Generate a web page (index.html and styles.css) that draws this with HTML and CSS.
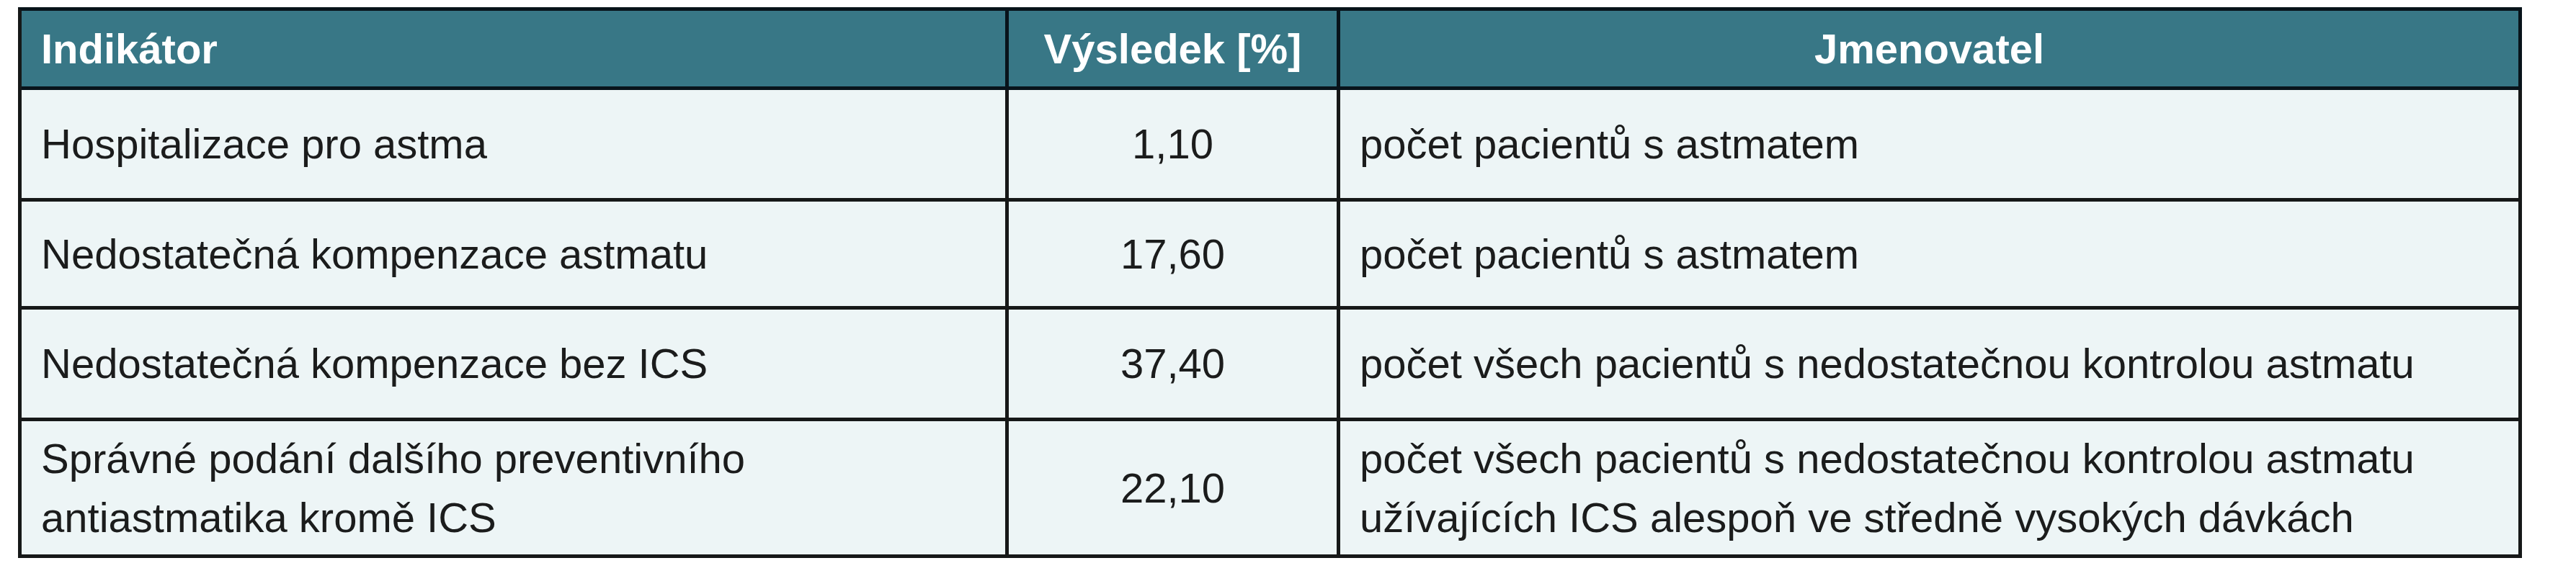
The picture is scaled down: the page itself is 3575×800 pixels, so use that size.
FILE: index.html
```html
<!DOCTYPE html>
<html lang="cs">
<head>
<meta charset="utf-8">
<title>Indikátory astmatu</title>
<link rel="stylesheet" href="styles.css">
</head>
<body>
<table class="ind-table">
  <thead>
    <tr class="row-head">
      <th class="c-ind">Indikátor</th>
      <th class="c-res">Výsledek [%]</th>
      <th class="c-den c-center">Jmenovatel</th>
    </tr>
  </thead>
  <tbody>
    <tr class="row-a">
      <td class="c-ind">Hospitalizace pro astma</td>
      <td class="c-res">1,10</td>
      <td class="c-den">počet pacientů s astmatem</td>
    </tr>
    <tr class="row-b">
      <td class="c-ind">Nedostatečná kompenzace astmatu</td>
      <td class="c-res">17,60</td>
      <td class="c-den">počet pacientů s astmatem</td>
    </tr>
    <tr class="row-a">
      <td class="c-ind">Nedostatečná kompenzace bez ICS</td>
      <td class="c-res">37,40</td>
      <td class="c-den">počet všech pacientů s nedostatečnou kontrolou astmatu</td>
    </tr>
    <tr class="row-c">
      <td class="c-ind">Správné podání dalšího preventivního<br>antiastmatika kromě ICS</td>
      <td class="c-res">22,10</td>
      <td class="c-den">počet všech pacientů s nedostatečnou kontrolou astmatu<br>užívajících ICS alespoň ve středně vysokých dávkách</td>
    </tr>
  </tbody>
</table>
</body>
</html>
```

FILE: styles.css
```css
html, body {
  margin: 0;
  padding: 0;
  background: #ffffff;
}

body {
  font-family: "Liberation Sans", Arial, sans-serif;
  color: #1b1c1c;
}

.ind-table {
  margin: 10px 0 0 25px;
  border-collapse: separate;
  border-spacing: 0;
  border-top: 5px solid #08131a;
  border-left: 5px solid #161818;
  table-layout: fixed;
  width: 3475px;
  font-size: 58px;
  line-height: 82px;
}

.ind-table th,
.ind-table td {
  box-sizing: border-box;
  padding: 0 27px;
  border-right: 5px solid #161818;
  border-bottom: 5px solid #161818;
  vertical-align: middle;
  text-align: left;
}

.ind-table th {
  background: #387786;
  color: #ffffff;
  font-weight: bold;
  border-color: #08131a;
}

.ind-table td {
  background: #edf5f6;
}

.ind-table .c-ind { width: 1370px; }
.ind-table .c-res { width: 460px; text-align: center; }
.ind-table .c-den { width: 1640px; }
.ind-table .c-center { text-align: center; }

.row-head { height: 110px; }
.row-a { height: 155px; }
.row-b { height: 150px; }
.row-c { height: 190px; }
```
